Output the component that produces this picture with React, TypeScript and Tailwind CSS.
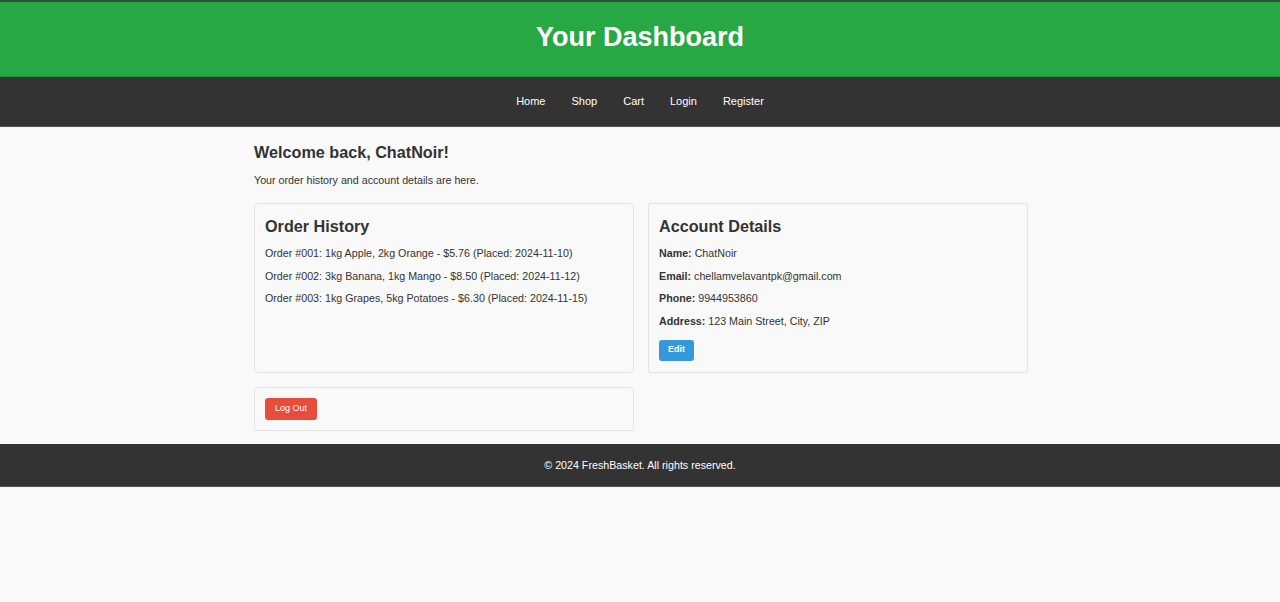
import React from "react";

export default function App() {
  const orders = [
    "Order #001: 1kg Apple, 2kg Orange - $5.76 (Placed: 2024-11-10)",
    "Order #002: 3kg Banana, 1kg Mango - $8.50 (Placed: 2024-11-12)",
    "Order #003: 1kg Grapes, 5kg Potatoes - $6.30 (Placed: 2024-11-15)",
  ];
  return (
    <div className="min-h-[602px] bg-[#f9f9f9] text-[#333] font-['Liberation_Sans',Arial,sans-serif]">
      <header className="h-[77px] bg-[#28a745] border-t-2 border-[#2f4f3a] border-b border-b-[#23913c] flex items-center justify-center pb-[4px]">
        <h1 className="text-[27px] font-bold text-white leading-none">Your Dashboard</h1>
      </header>
      <nav className="h-[50px] bg-[#333] border-b border-b-[#555] flex items-center justify-center gap-[26px] text-[11px] text-white">
        <span>Home</span>
        <span>Shop</span>
        <span>Cart</span>
        <span>Login</span>
        <span>Register</span>
      </nav>
      <main className="w-[774px] ml-[calc(50%-386px)] pt-[15px] pb-[13px]">
        <h2 className="text-[16.2px] font-bold leading-[20px]">Welcome back, ChatNoir!</h2>
        <p className="text-[10.7px] mt-[11px] leading-[14px]">Your order history and account details are here.</p>
        <div className="grid grid-cols-2 gap-[14px] mt-[16px]">
          <section className="border border-[#e3e3e3] rounded-[3px] px-[10px] pt-[12px] pb-[10px] h-[170px]">
            <h3 className="text-[16.2px] font-bold leading-[20px]">Order History</h3>
            <div className="mt-[10px] flex flex-col gap-[8.5px] text-[10.7px] leading-[14px]">
              {orders.map((o) => (
                <p key={o}>{o}</p>
              ))}
            </div>
          </section>
          <section className="border border-[#e3e3e3] rounded-[3px] px-[10px] pt-[12px] pb-[10px] h-[170px]">
            <h3 className="text-[16.2px] font-bold leading-[20px]">Account Details</h3>
            <div className="mt-[10px] flex flex-col gap-[8.5px] text-[10.7px] leading-[14px]">
              <p><b>Name:</b> ChatNoir</p>
              <p><b>Email:</b> chellamvelavantpk@gmail.com</p>
              <p><b>Phone:</b> 9944953860</p>
              <p><b>Address:</b> 123 Main Street, City, ZIP</p>
            </div>
            <button className="mt-[12px] h-[21px] w-[35px] rounded-[3px] bg-[#3498db] text-white text-[9px] font-bold">Edit</button>
          </section>
          <section className="border border-[#e3e3e3] rounded-[3px] px-[10px] py-[10px]">
            <button className="block h-[22px] w-[52px] rounded-[3px] bg-[#e74c3c] text-white text-[9px]">Log Out</button>
          </section>
        </div>
      </main>
      <footer className="h-[43px] bg-[#333] border-b border-b-[#555] flex items-center justify-center text-white text-[10.7px]">
        © 2024 FreshBasket. All rights reserved.
      </footer>
    </div>
  );
}
